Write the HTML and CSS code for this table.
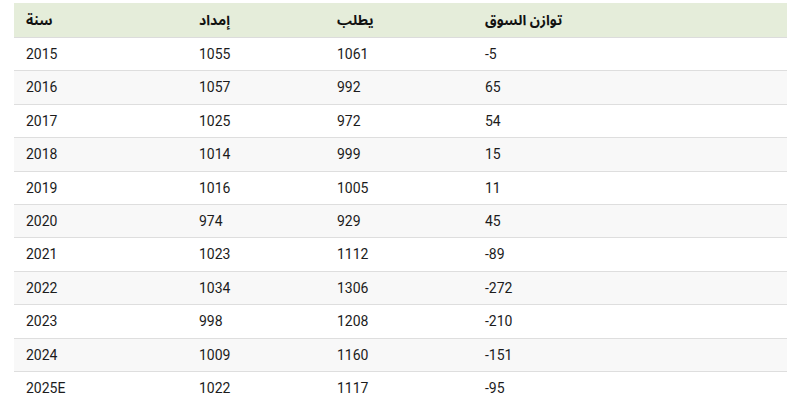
FILE: index.html
```html
<!DOCTYPE html>
<html lang="ar">
<head>
<meta charset="utf-8">
<link rel="stylesheet" href="styles.css">
</head>
<body>
<table class="market">
  <colgroup>
    <col class="c1"><col class="c2"><col class="c3"><col class="c4">
  </colgroup>
  <thead>
    <tr><th>سنة</th><th>إمداد</th><th>يطلب</th><th>توازن السوق</th></tr>
  </thead>
  <tbody>
    <tr><td>2015</td><td>1055</td><td>1061</td><td>-5</td></tr>
    <tr><td>2016</td><td>1057</td><td>992</td><td>65</td></tr>
    <tr><td>2017</td><td>1025</td><td>972</td><td>54</td></tr>
    <tr><td>2018</td><td>1014</td><td>999</td><td>15</td></tr>
    <tr><td>2019</td><td>1016</td><td>1005</td><td>11</td></tr>
    <tr><td>2020</td><td>974</td><td>929</td><td>45</td></tr>
    <tr><td>2021</td><td>1023</td><td>1112</td><td>-89</td></tr>
    <tr><td>2022</td><td>1034</td><td>1306</td><td>-272</td></tr>
    <tr><td>2023</td><td>998</td><td>1208</td><td>-210</td></tr>
    <tr><td>2024</td><td>1009</td><td>1160</td><td>-151</td></tr>
    <tr><td>2025E</td><td>1022</td><td>1117</td><td>-95</td></tr>
  </tbody>
</table>
</body>
</html>
```
FILE: styles.css
```css
html, body {
  margin: 0;
  background: #fff;
}
body {
  padding: 3px 14px 0;
  font-family: Roboto, "DejaVu Sans", sans-serif;
  font-size: 14px;
  color: #1c1c1c;
}
.market {
  width: 773px;
  border-collapse: collapse;
  table-layout: fixed;
}
.c1 { width: 173px; }
.c2 { width: 138px; }
.c3 { width: 148px; }
.c4 { width: 314px; }
.market th {
  background: #e5edda;
  text-align: left;
  font-family: "Noto Sans Arabic", "Noto Sans Arabic UI", Roboto, sans-serif;
  font-weight: bold;
  padding: 9px 12px 7px;
  height: 18px;
  line-height: 18px;
  border-bottom: 1px solid #dcdcdc;
  color: #111;
}
.market td {
  text-align: left;
  padding: 8px 12px;
  line-height: 16.4px;
  border-bottom: 1px solid #dedede;
}
.market tbody tr:nth-child(even) td {
  background: #f8f8f8;
}
.market tbody tr:last-child td {
  border-bottom: none;
}
```
